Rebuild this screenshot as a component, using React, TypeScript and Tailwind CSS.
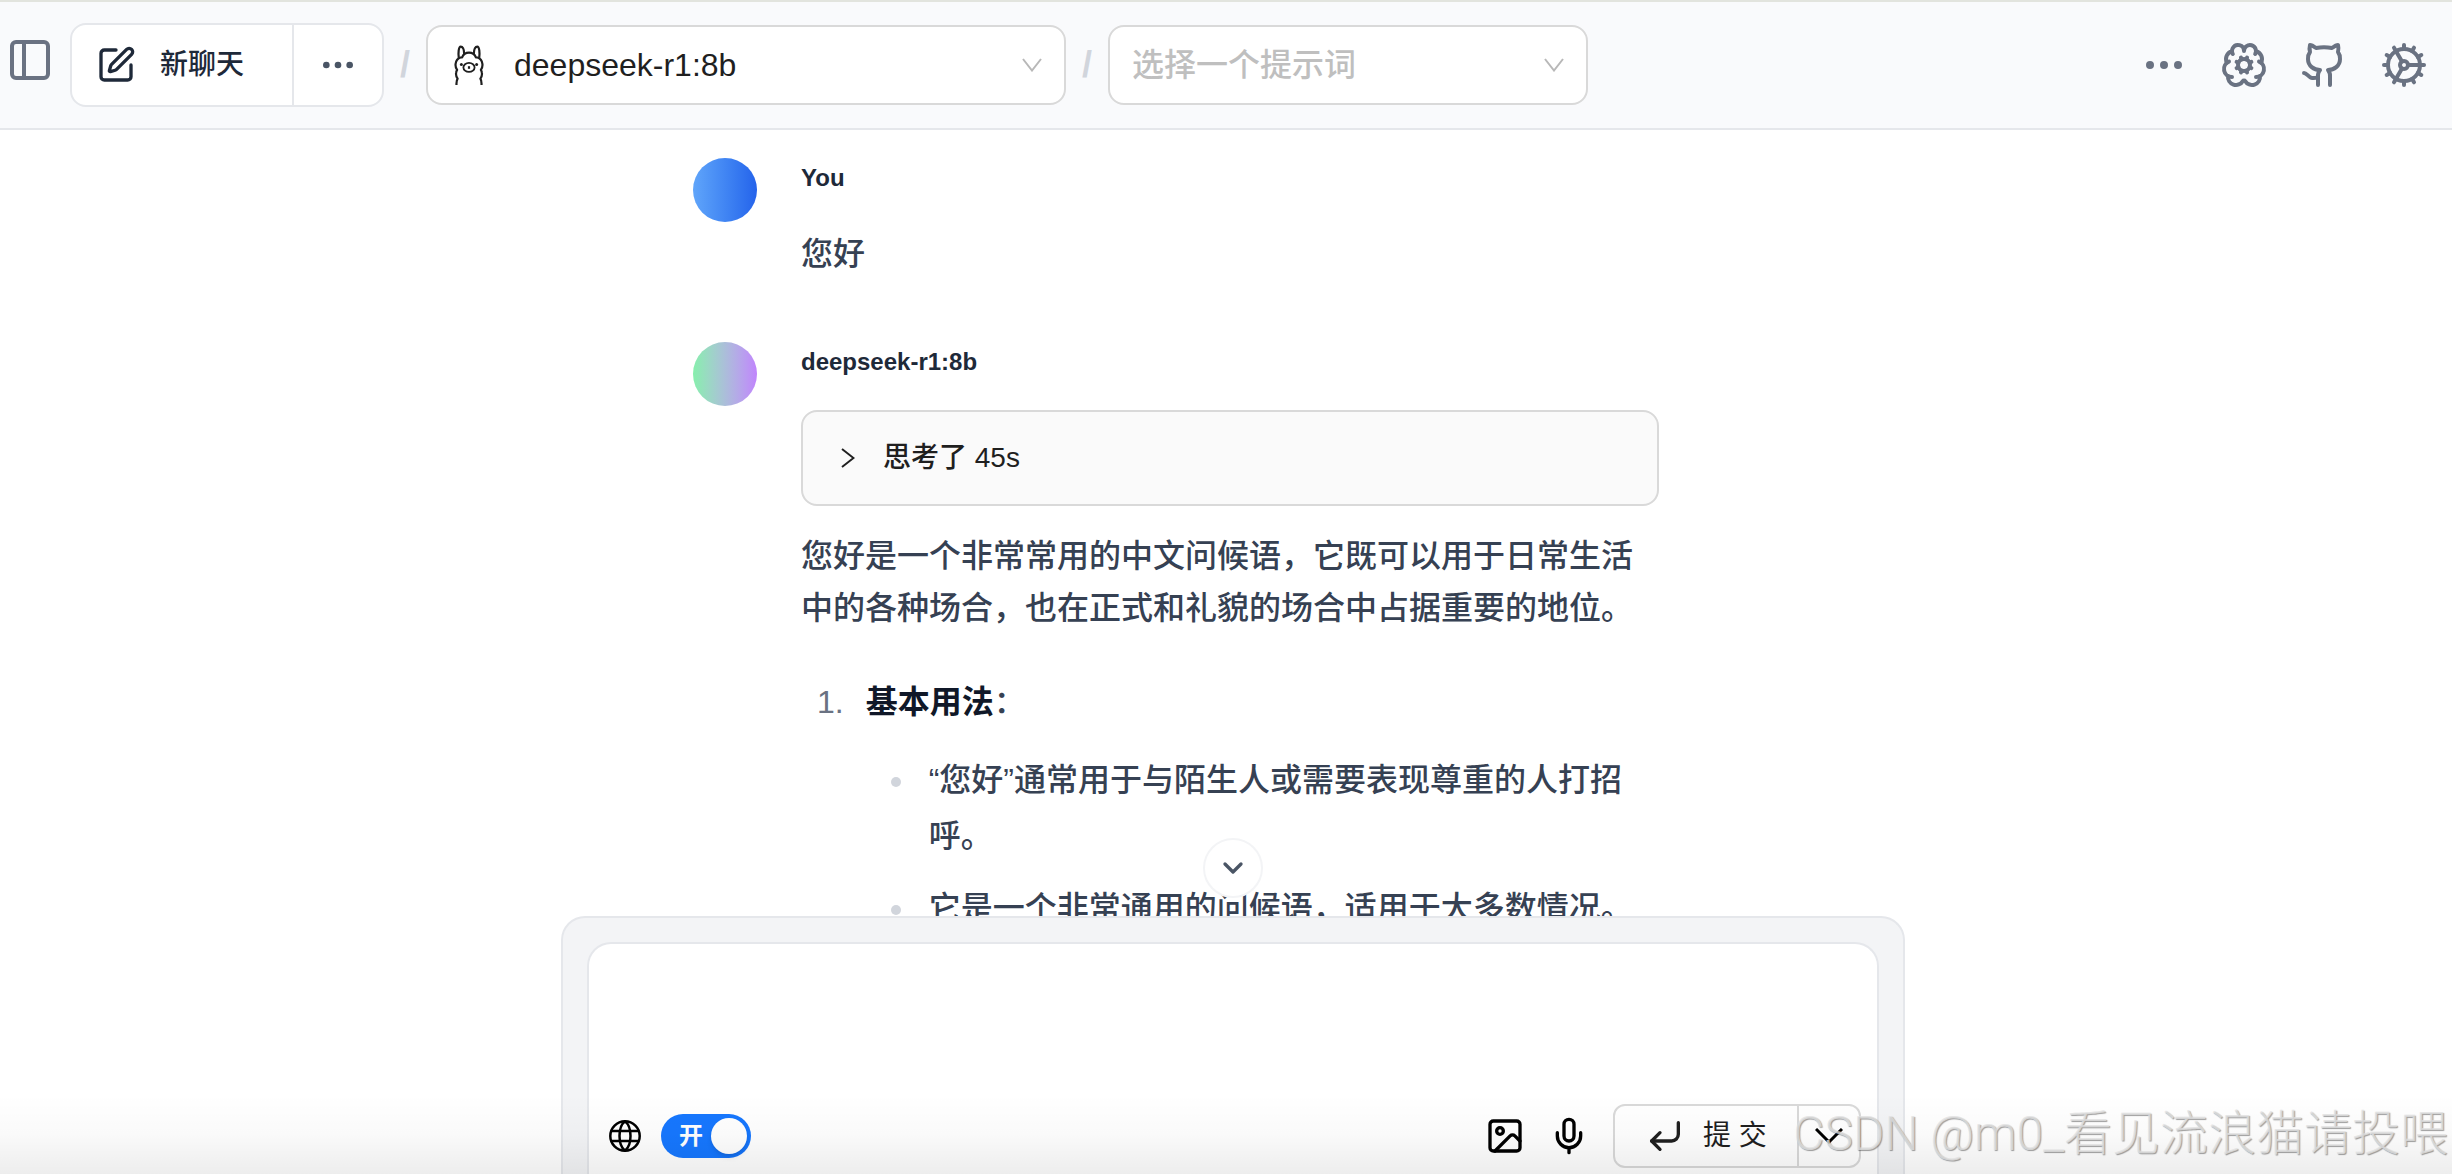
import React, { useState } from "react";
import {
  BrainCog,
  ChevronDown,
  Cog,
  CornerDownLeft,
  Ellipsis,
  Github,
  Image,
  Mic,
  PanelLeft,
  SquarePen,
} from "lucide-react";

const LlamaIcon = () => (
  <svg
    viewBox="0 0 30 40"
    fill="none"
    stroke="currentColor"
    strokeWidth={2.2}
    strokeLinecap="butt"
    strokeLinejoin="round"
    className="h-10 w-[30px] shrink-0 text-[#1f1f1f]"
    aria-hidden="true"
  >
    <path d="M2.500 40c-.2-2.800.2-4.900 1.100-6.400-1.300-1.700-1.800-3.600-1.500-5.700.1-1.200.5-2.200 1-3-1.300-1.800-1.800-3.800-1.500-6.100.4-3.200 2.400-5.500 5-6.300.5-.1 1-.2 1.500-.1C9.300 9.200 12 7.600 15 7.600s5.700 1.600 6.900 4.800c.5-.1 1 0 1.500.1 2.600.8 4.600 3.100 5 6.300.3 2.300-.2 4.300-1.500 6.100.5.800.9 1.800 1 3 .3 2.100-.2 4-1.500 5.700.9 1.500 1.300 3.600 1.100 6.400" />
    <path d="M4.800 12.800C4.100 8 4.600 1.700 6.700 1.700c2.100 0 3.400 3.500 3.500 7.500M25.200 12.800C25.900 8 25.400 1.700 23.300 1.700c-2.100 0-3.400 3.500-3.500 7.500" />
    <ellipse cx={15} cy={22.4} rx={5.6} ry={4.5} strokeWidth={1.8} />
    <path d="M15 21.200v2.600" />
    <circle cx={7.4} cy={19.4} r={1.5} fill="currentColor" stroke="none" />
    <circle cx={22.6} cy={19.4} r={1.5} fill="currentColor" stroke="none" />
  </svg>
);

const GlobeIcon = () => (
  <svg
    viewBox="0 0 32 32"
    fill="none"
    stroke="currentColor"
    strokeWidth={2.5}
    className="size-8 text-black"
    aria-hidden="true"
  >
    <circle cx={16} cy={16} r={14.7} />
    <path d="M16 1.300C12.500 4 10.500 9.500 10.500 16s2 12 5.500 14.700C19.500 28 21.500 22.500 21.500 16s-2-12-5.500-14.700z" />
    <path d="M2.500 11h27M2.500 21h27" />
  </svg>
);

const SelectArrow = () => (
  <svg
    viewBox="0 0 20 14"
    fill="none"
    stroke="currentColor"
    strokeWidth={2}
    className="pointer-events-none h-3.5 w-5 shrink-0 text-[#b8b8b8]"
    aria-hidden="true"
  >
    <path d="M1 1l9 11.500L19 1" />
  </svg>
);

const Slash = () => (
  <span className="w-[42px] text-center text-4xl font-bold text-gray-300">
    /
  </span>
);

const Header = () => {
  return (
    <header className="flex h-[130px] shrink-0 items-center border-y-2 border-t-[#e2e4de] border-b-gray-200 bg-[#f9fafc] pr-6 pl-1.5">
      <button className="mr-4 mb-2.5 text-gray-500" aria-label="侧边栏">
        <PanelLeft size={48} />
      </button>
      <div className="flex h-[84px] rounded-2xl border-2 border-gray-200 bg-white">
        <button className="flex w-[222px] items-center gap-6 border-r-2 border-gray-200 pl-6 text-[28px] font-medium text-gray-800">
          <SquarePen size={40} />
          新聊天
        </button>
        <button
          className="flex w-[88px] items-center justify-center text-gray-600"
          aria-label="更多"
        >
          <Ellipsis size={40} />
        </button>
      </div>
      <Slash />
      <div className="flex h-20 w-[640px] items-center rounded-2xl border-2 border-[#d9d9d9] bg-white pr-[22px] pl-[26px]">
        <LlamaIcon />
        <select
          aria-label="模型"
          className="h-full grow appearance-none pl-[30px] text-[32px] text-[#1f1f1f] outline-none"
        >
          <option>deepseek-r1:8b</option>
        </select>
        <SelectArrow />
      </div>
      <Slash />
      <div className="flex h-20 w-[480px] items-center rounded-2xl border-2 border-[#d9d9d9] bg-white pr-[22px] pl-[22px]">
        <select
          aria-label="提示词"
          className="h-full grow appearance-none text-[32px] font-medium text-[#bfbfbf] outline-none"
        >
          <option>选择一个提示词</option>
        </select>
        <SelectArrow />
      </div>
      <nav className="ml-auto flex items-center gap-8 text-gray-500">
        <button aria-label="更多选项">
          <Ellipsis size={48} />
        </button>
        <a href="#knowledge" aria-label="知识库">
          <BrainCog size={48} />
        </a>
        <a href="#github" aria-label="GitHub">
          <Github size={48} />
        </a>
        <a href="#settings" aria-label="设置">
          <Cog size={48} />
        </a>
      </nav>
    </header>
  );
};

const Messages = () => {
  const [open, setOpen] = useState(false);

  return (
    <div className="mx-auto flex max-w-[1080px] flex-col gap-[60px] pt-7 pr-[114px]">
      <div className="flex gap-11">
        <div className="size-16 shrink-0 rounded-full bg-linear-to-r from-[#60a5fa] to-[#2563eb]" />
        <div className="flex grow flex-col gap-8 pt-1">
          <h2 className="text-2xl leading-8 font-bold text-gray-800">You</h2>
          <p className="text-[32px] leading-[56px] font-medium text-gray-700">
            您好
          </p>
        </div>
      </div>
      <div className="flex gap-11">
        <div className="size-16 shrink-0 rounded-full bg-linear-to-r from-[#86efac] to-[#c084fc]" />
        <div className="grow pt-1 text-[32px] leading-[56px] font-medium text-gray-700">
          <h2 className="mb-8 text-2xl leading-8 font-bold text-gray-800">
            deepseek-r1:8b
          </h2>
          <button
            aria-expanded={open}
            onClick={() => setOpen(!open)}
            className="mb-6 flex h-24 w-full items-center gap-7 rounded-2xl border-2 border-[#d9d9d9] bg-[#fafafa] pl-[38px] text-[28px] text-[#1f1f1f]"
          >
            <svg
              viewBox="0 0 14 20"
              fill="none"
              stroke="currentColor"
              strokeWidth={2}
              className="h-5 w-3.5"
            >
              <path d="M1 1l11.500 9L1 19" />
            </svg>
            思考了 45s
          </button>
          <p className="leading-[52px]">
            您好是一个非常常用的中文问候语，它既可以用于日常生活中的各种场合，也在正式和礼貌的场合中占据重要的地位。
          </p>
          <ol className="mt-10 pl-4">
            <li className="flex gap-[22px]">
              <span className="font-normal text-gray-500">1.</span>
              <div>
                <strong className="font-bold text-gray-900">基本用法</strong>：
                <ul className="mt-[22px] flex flex-col gap-4">
                  <li className="flex gap-7">
                    <span className="mt-[25px] ml-[25px] size-2.5 shrink-0 rounded-full bg-gray-300" />
                    <span>
                      “您好”通常用于与陌生人或需要表现尊重的人打招呼。
                    </span>
                  </li>
                  <li className="flex gap-7">
                    <span className="mt-[25px] ml-[25px] size-2.5 shrink-0 rounded-full bg-gray-300" />
                    <span>它是一个非常通用的问候语，适用于大多数情况。</span>
                  </li>
                </ul>
              </div>
            </li>
          </ol>
        </div>
      </div>
    </div>
  );
};

const ChatForm = () => {
  return (
    <form className="mx-auto w-full max-w-[1344px] rounded-t-3xl border-2 border-b-0 border-gray-200 bg-gray-100 px-6 pt-6">
      <div className="rounded-t-3xl border-2 border-b-0 border-gray-200 bg-white pb-1.5">
        <textarea
          aria-label="消息"
          className="block h-40 w-full resize-none px-5 py-4 text-[32px] outline-none"
        />
        <div className="flex items-center justify-between pr-4 pl-5">
          <div className="flex items-center gap-5">
            <GlobeIcon />
            <label className="flex h-11 w-[90px] items-center justify-between rounded-full bg-[#1677ff] pr-1 pl-[18px] text-2xl font-bold text-white">
              <input
                type="checkbox"
                role="switch"
                defaultChecked
                className="sr-only"
              />
              开
              <span className="size-9 rounded-full bg-white shadow-md" />
            </label>
          </div>
          <div className="flex items-center gap-6 text-black">
            <button type="button" aria-label="上传图片">
              <Image size={40} />
            </button>
            <button type="button" aria-label="语音输入">
              <Mic size={40} />
            </button>
            <div className="flex h-16 rounded-xl border-2 border-[#d9d9d9] text-[#1f1f1f]">
              <button
                type="submit"
                className="flex w-[184px] items-center gap-[18px] border-r-2 border-[#d9d9d9] pl-[30px] text-[28px]"
              >
                <CornerDownLeft size={40} />
                提 交
              </button>
              <button
                type="button"
                aria-label="提交选项"
                className="flex w-15 items-center justify-center text-black"
              >
                <svg
                  viewBox="0 0 28 16"
                  fill="none"
                  stroke="currentColor"
                  strokeWidth={3}
                  className="h-4 w-7"
                >
                  <path d="M1 1l13 13L27 1" />
                </svg>
              </button>
            </div>
          </div>
        </div>
      </div>
    </form>
  );
};

export default function App() {
  return (
    <div className="relative flex h-screen flex-col overflow-hidden bg-white font-['Liberation_Sans','Noto_Sans_CJK_SC',sans-serif]">
      <Header />
      <main className="flex min-h-0 grow flex-col pl-3.5">
        <div className="relative min-h-0 grow overflow-hidden">
          <Messages />
          <button
            aria-label="滚动到底部"
            className="absolute bottom-[18px] left-1/2 flex size-15 -translate-x-1/2 items-center justify-center rounded-full border-2 border-gray-100 bg-white text-gray-600"
          >
            <ChevronDown size={32} strokeWidth={2.5} />
          </button>
        </div>
        <ChatForm />
      </main>
      <div className="pointer-events-none absolute inset-x-0 bottom-0 h-20 bg-linear-to-t from-black/7 via-black/2 to-transparent" />
      <p className="pointer-events-none absolute right-1 bottom-0 font-['Roboto','Noto_Sans_CJK_SC',sans-serif] text-5xl leading-[80px] font-light whitespace-nowrap text-[#e2e2e2]/80 [text-shadow:1px_1px_1px_#00000060]">
        CSDN @m0_看见流浪猫请投喂
      </p>
    </div>
  );
}
